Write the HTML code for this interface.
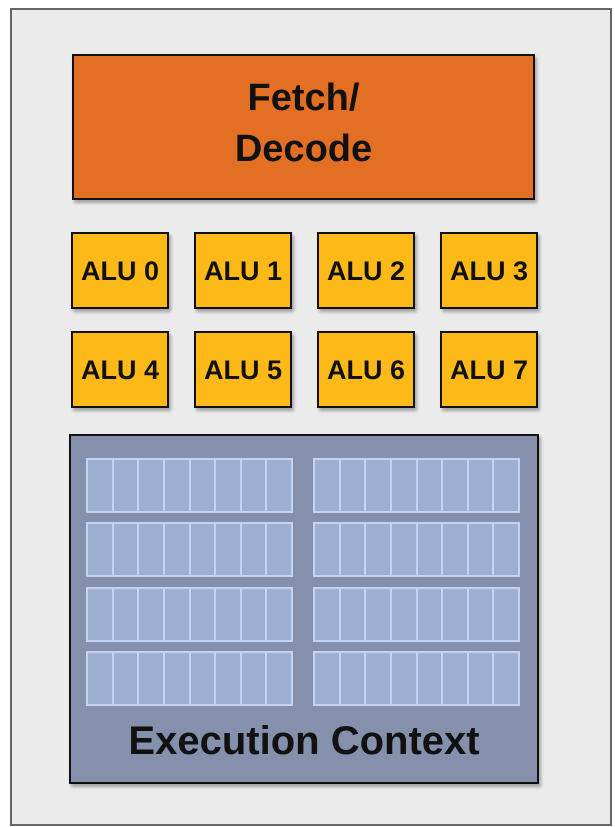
<!DOCTYPE html>
<html><head><style>
body{margin:0;width:615px;height:827px;background:#fff;position:relative;overflow:hidden;font-family:"Liberation Sans",sans-serif;font-weight:bold}
.a{position:absolute;box-sizing:border-box}
.outer{left:10px;top:8px;width:602px;height:818px;background:#ebebeb;border:2px solid #666}
.fetch{left:72px;top:54px;width:463px;height:146px;background:#e36f25;border:2px solid #111;box-shadow:2px 3px 3px rgba(0,0,0,.3);text-align:center;font-size:38px;line-height:51px;padding-top:17px;color:#111}
.alu{width:98px;height:77px;background:#fcb918;border:2px solid #111;box-shadow:2px 3px 3px rgba(0,0,0,.3);font-size:27px;line-height:75px;text-align:center;color:#111}
.exec{left:69px;top:434px;width:470px;height:350px;background:#8590ac;border:2px solid #111;box-shadow:2px 3px 3px rgba(0,0,0,.3)}
.grid{width:207px;height:55px;border:2px solid #c3d3f4;background:#9eb0d1;display:flex}
.grid div{flex:1;border-right:2px solid #c3d3f4}
.grid div:last-child{border-right:none}
.txt{left:69px;top:719px;width:470px;text-align:center;font-size:40px;color:#111}
</style></head><body>
<div class="a outer"></div>
<div class="a fetch">Fetch/<br>Decode</div>
<div class="a alu" style="left:71px;top:232px">ALU 0</div>
<div class="a alu" style="left:194px;top:232px">ALU 1</div>
<div class="a alu" style="left:317px;top:232px">ALU 2</div>
<div class="a alu" style="left:440px;top:232px">ALU 3</div>
<div class="a alu" style="left:71px;top:331px">ALU 4</div>
<div class="a alu" style="left:194px;top:331px">ALU 5</div>
<div class="a alu" style="left:317px;top:331px">ALU 6</div>
<div class="a alu" style="left:440px;top:331px">ALU 7</div>
<div class="a exec"></div>
<div class="a grid" style="left:86px;top:458px"><div></div><div></div><div></div><div></div><div></div><div></div><div></div><div></div></div>
<div class="a grid" style="left:313px;top:458px"><div></div><div></div><div></div><div></div><div></div><div></div><div></div><div></div></div>
<div class="a grid" style="left:86px;top:522px"><div></div><div></div><div></div><div></div><div></div><div></div><div></div><div></div></div>
<div class="a grid" style="left:313px;top:522px"><div></div><div></div><div></div><div></div><div></div><div></div><div></div><div></div></div>
<div class="a grid" style="left:86px;top:587px"><div></div><div></div><div></div><div></div><div></div><div></div><div></div><div></div></div>
<div class="a grid" style="left:313px;top:587px"><div></div><div></div><div></div><div></div><div></div><div></div><div></div><div></div></div>
<div class="a grid" style="left:86px;top:651px"><div></div><div></div><div></div><div></div><div></div><div></div><div></div><div></div></div>
<div class="a grid" style="left:313px;top:651px"><div></div><div></div><div></div><div></div><div></div><div></div><div></div><div></div></div>
<div class="a txt">Execution Context</div>
</body></html>
